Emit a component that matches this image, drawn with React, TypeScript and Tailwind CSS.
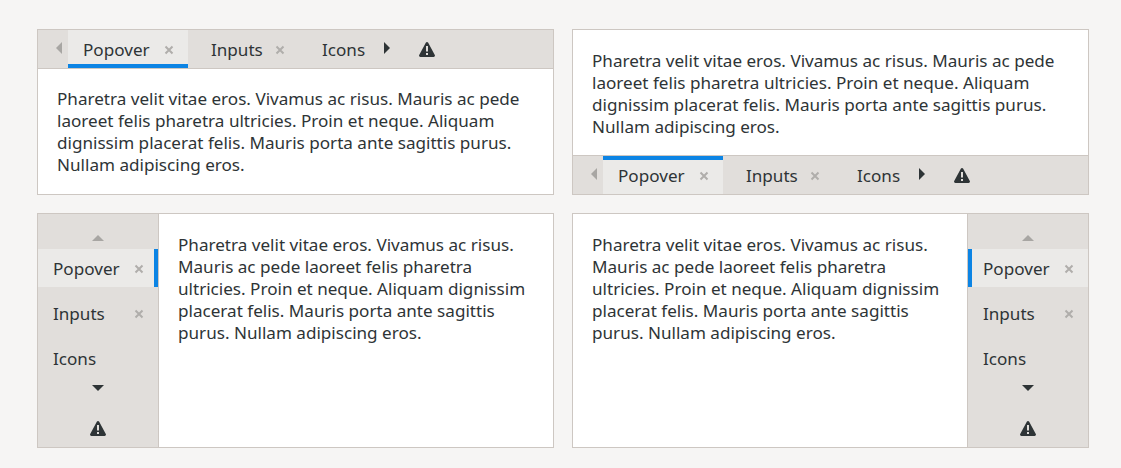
import type { ReactNode } from 'react'

const loremText =
  'Pharetra velit vitae eros. Vivamus ac risus. Mauris ac pede laoreet felis pharetra ultricies. Proin et neque. Aliquam dignissim placerat felis. Mauris porta ante sagittis purus. Nullam adipiscing eros.'

function Arrow({ dir, dim }: { dir: 'left' | 'right' | 'up' | 'down'; dim?: boolean }) {
  const points = {
    left: '6,0 6,12 0,6',
    right: '0,0 0,12 6,6',
    up: '0,6 12,6 6,0',
    down: '0,0 12,0 6,6',
  }[dir]
  const horizontal = dir === 'left' || dir === 'right'
  return (
    <svg
      width={horizontal ? 6 : 12}
      height={horizontal ? 12 : 6}
      viewBox={horizontal ? '0 0 6 12' : '0 0 12 6'}
      className={`block ${dim ? 'text-[#a8a6a3]' : 'text-[#2e3436]'}`}
    >
      <polygon points={points} fill="currentColor" />
    </svg>
  )
}

function CloseIcon() {
  return (
    <svg width="10" height="10" viewBox="0 0 10 10" className="mt-[2px] shrink-0 text-[#b0aeab]">
      <path d="M1.5 1.5l7 7M8.5 1.5l-7 7" stroke="currentColor" strokeWidth="2" />
    </svg>
  )
}

function WarningIcon() {
  return (
    <svg width="16" height="15" viewBox="0 0 16 15" className="block text-[#2e3436]">
      <path
        fillRule="evenodd"
        fill="currentColor"
        d="M8 0c-.5 0-.9.3-1.2.8L.2 12.9c-.5 1 .2 2.1 1.2 2.1h13.2c1 0 1.7-1.1 1.2-2.1L9.2.8C8.9.3 8.5 0 8 0zM7 4h2v5.5H7zm0 7h2v2H7z"
      />
    </svg>
  )
}

function Label({ children }: { children: ReactNode }) {
  return <span className="pt-[2px]">{children}</span>
}

function HorizontalTabs({ position }: { position: 'top' | 'bottom' }) {
  const isTop = position === 'top'
  return (
    <div
      className={`flex h-[39px] items-stretch bg-[#e1dedb] border-[#cdc7c2] ${isTop ? 'border-b' : 'border-t'}`}
    >
      <div className="flex w-[30px] items-center pb-[2px] pl-[18px]">
        <Arrow dir="left" dim />
      </div>
      <div
        className={`flex w-[120px] items-center gap-[14px] bg-[#ebeae8] pl-[15px] border-[#0c84e4] ${isTop ? 'border-b-4 pt-[4px]' : 'border-t-4 pb-[4px]'}`}
      >
        <Label>Popover</Label>
        <CloseIcon />
      </div>
      <div className="ml-[8px] flex w-[104px] items-center gap-[12px] pl-[15px]">
        <Label>Inputs</Label>
        <CloseIcon />
      </div>
      <div className="ml-[7px] flex w-[72px] items-center pl-[15px]">
        <Label>Icons</Label>
      </div>
      <div className="ml-[5px] flex items-center pb-[2px]">
        <Arrow dir="right" />
      </div>
      <div className="ml-[29px] flex items-center">
        <WarningIcon />
      </div>
    </div>
  )
}

function VerticalTabs({ position }: { position: 'left' | 'right' }) {
  const isLeft = position === 'left'
  return (
    <div
      className={`flex w-[121px] shrink-0 flex-col bg-[#e1dedb] border-[#cdc7c2] ${isLeft ? 'border-r' : 'border-l'}`}
    >
      <div className="flex h-[35px] items-end justify-center pb-[8px]">
        <Arrow dir="up" dim />
      </div>
      <div
        className={`flex h-[38px] items-center justify-between bg-[#ebeae8] border-[#0c84e4] ${isLeft ? 'border-r-4 pl-[15px] pr-[10px]' : 'border-l-4 pl-[11px] pr-[14px]'}`}
      >
        <Label>Popover</Label>
        <CloseIcon />
      </div>
      <div className="mt-[7px] flex h-[38px] items-center justify-between pl-[15px] pr-[14px]">
        <Label>Inputs</Label>
        <CloseIcon />
      </div>
      <div className="mt-[7px] flex h-[38px] items-center px-[15px]">
        <Label>Icons</Label>
      </div>
      <div className="mt-[8px] flex justify-center">
        <Arrow dir="down" />
      </div>
      <div className="mt-[30px] flex justify-center">
        <WarningIcon />
      </div>
    </div>
  )
}

export default function App() {
  return (
    <div
      className="min-h-[468px] bg-[#f6f5f4] pl-[37px] pr-[32px] pt-[29px] text-[17.1px] leading-[22px] text-[#2e3436]"
      style={{ fontFamily: '"Noto Sans", sans-serif' }}
    >
      <div className="grid grid-cols-[517px_517px] gap-x-[18px] gap-y-[18px]">
        <div className="flex h-[166px] flex-col border border-[#cdc7c2] bg-white">
          <HorizontalTabs position="top" />
          <p className="px-[19px] pt-[19px]">{loremText}</p>
        </div>
        <div className="flex h-[166px] flex-col border border-[#cdc7c2] bg-white">
          <p className="flex-1 px-[19px] pt-[20px]">{loremText}</p>
          <HorizontalTabs position="bottom" />
        </div>
        <div className="flex h-[235px] border border-[#cdc7c2] bg-white">
          <VerticalTabs position="left" />
          <p className="px-[19px] pt-[20px]">{loremText}</p>
        </div>
        <div className="flex h-[235px] border border-[#cdc7c2] bg-white">
          <p className="flex-1 px-[19px] pt-[20px]">{loremText}</p>
          <VerticalTabs position="right" />
        </div>
      </div>
    </div>
  )
}
